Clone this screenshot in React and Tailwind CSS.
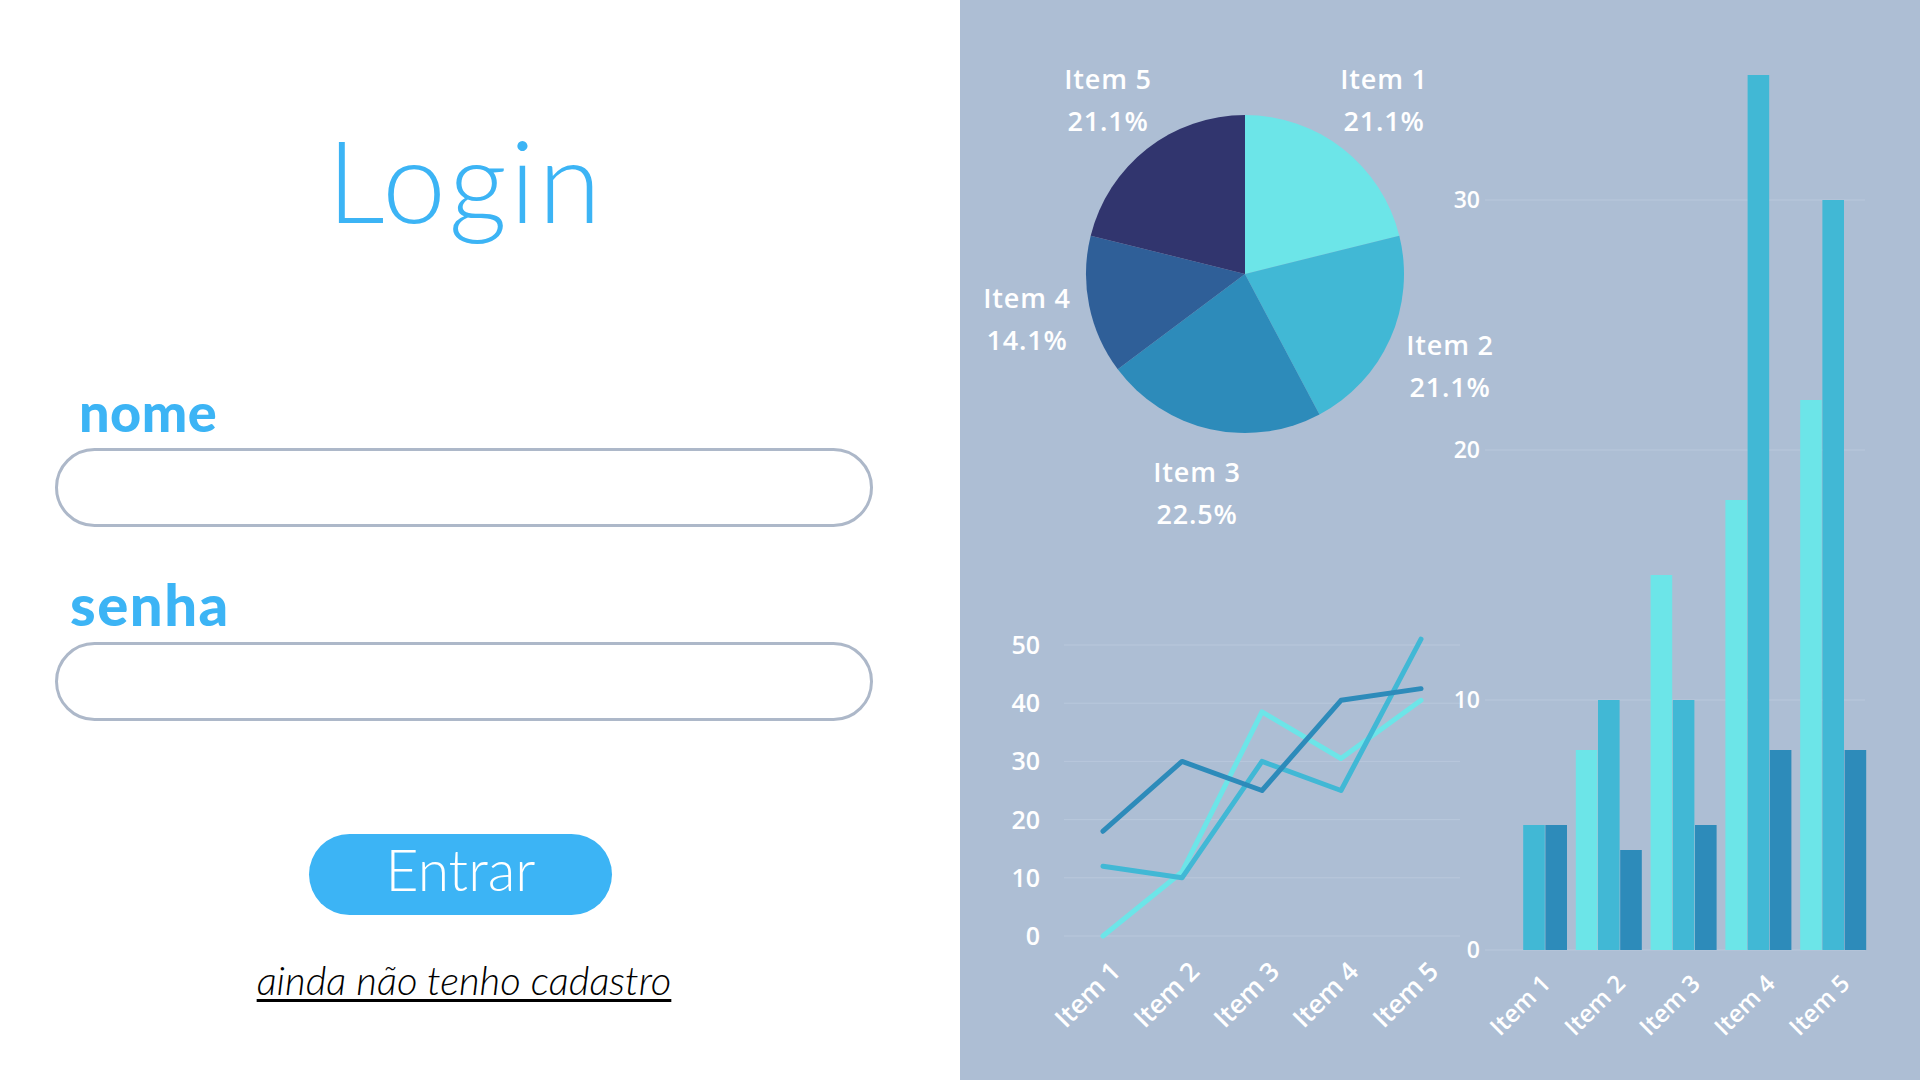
import React from "react";

const C1 = "#6ce5e8";
const C2 = "#41b8d5";
const C3 = "#2d8bba";
const C4 = "#2f5f98";
const C5 = "#31356e";
const FONT = "'Open Sans', 'Liberation Sans', sans-serif";

function slicePath(cx, cy, r, a0, a1) {
  const rad = (a) => (a * Math.PI) / 180;
  const x0 = cx + r * Math.sin(rad(a0));
  const y0 = cy - r * Math.cos(rad(a0));
  const x1 = cx + r * Math.sin(rad(a1));
  const y1 = cy - r * Math.cos(rad(a1));
  const large = a1 - a0 > 180 ? 1 : 0;
  return `M ${cx} ${cy} L ${x0} ${y0} A ${r} ${r} 0 ${large} 1 ${x1} ${y1} Z`;
}

function Pie() {
  const vals = [21.1, 21.1, 22.5, 14.1, 21.1];
  const cols = [C1, C2, C3, C4, C5];
  const total = vals.reduce((a, b) => a + b, 0);
  let acc = 0;
  const slices = vals.map((v, i) => {
    const a0 = (acc / total) * 360;
    acc += v;
    const a1 = (acc / total) * 360;
    return <path key={i} d={slicePath(285, 274, 159, a0, a1)} fill={cols[i]} />;
  });
  const labels = [
    { x: 148, y: 89, t: "Item 5", p: "21.1%" },
    { x: 424, y: 89, t: "Item 1", p: "21.1%" },
    { x: 67, y: 308, t: "Item 4", p: "14.1%" },
    { x: 490, y: 355, t: "Item 2", p: "21.1%" },
    { x: 237, y: 482, t: "Item 3", p: "22.5%" },
  ];
  return (
    <g>
      {slices}
      {labels.map((l, i) => (
        <g key={i} fill="#ffffff" fontFamily={FONT} fontWeight="600" fontSize="27" textAnchor="middle" letterSpacing="0.8">
          <text x={l.x} y={l.y}>{l.t}</text>
          <text x={l.x} y={l.y + 42}>{l.p}</text>
        </g>
      ))}
    </g>
  );
}

function LineChart() {
  const xs = [143, 222, 302, 381, 461];
  const y0 = 936;
  const unit = (936 - 645) / 50;
  const series = [
    { c: C1, v: [0, 11, 38.5, 30.5, 40.5] },
    { c: C2, v: [12, 10, 30, 25, 51] },
    { c: C3, v: [18, 30, 25, 40.5, 42.5] },
  ];
  const ticks = [0, 10, 20, 30, 40, 50];
  return (
    <g>
      {ticks.map((t) => (
        <g key={t}>
          <line x1={104} x2={500} y1={y0 - t * unit} y2={y0 - t * unit} stroke="#b9c8dc" strokeWidth="1" />
          <text x={80} y={y0 - t * unit + 9} fill="#ffffff" fontFamily={FONT} fontWeight="600" fontSize="25" textAnchor="end">
            {t}
          </text>
        </g>
      ))}
      {series.map((s, i) => (
        <polyline
          key={i}
          points={s.v.map((v, j) => `${xs[j]},${y0 - v * unit}`).join(" ")}
          fill="none"
          stroke={s.c}
          strokeWidth="5"
          strokeLinejoin="round"
          strokeLinecap="round"
        />
      ))}
      {xs.map((x, i) => (
        <text
          key={i}
          x={x + 19}
          y={973}
          transform={`rotate(-45 ${x + 19} 973)`}
          fill="#ffffff"
          fontFamily={FONT}
          fontWeight="600"
          fontSize="26"
          textAnchor="end"
        >
          {`Item ${i + 1}`}
        </text>
      ))}
    </g>
  );
}

function BarChart() {
  const y0 = 950;
  const unit = 25;
  const data = [
    [0, 5, 5],
    [8, 10, 4],
    [15, 10, 5],
    [18, 35, 8],
    [22, 30, 8],
  ];
  const cols = [C1, C2, C3];
  const ticks = [0, 10, 20, 30];
  const bw = 21.6;
  return (
    <g>
      {ticks.map((t) => (
        <g key={t}>
          <line x1={525} x2={905} y1={y0 - t * unit} y2={y0 - t * unit} stroke="#b9c8dc" strokeWidth="1" />
          <text x={520} y={y0 - t * unit + 8} fill="#ffffff" fontFamily={FONT} fontWeight="600" fontSize="23" textAnchor="end">
            {t}
          </text>
        </g>
      ))}
      {data.map((g, i) => {
        const gx = 541 + i * 74.8;
        return (
          <g key={i}>
            {g.map((v, j) =>
              v > 0 ? (
                <rect key={j} x={gx + j * (bw + 0.6)} y={y0 - v * unit} width={bw} height={v * unit} fill={cols[j]} />
              ) : null
            )}
            <text
              x={gx + 51}
              y={985}
              transform={`rotate(-45 ${gx + 51} 985)`}
              fill="#ffffff"
              fontFamily={FONT}
              fontWeight="600"
              fontSize="24"
              textAnchor="end"
            >
              {`Item ${i + 1}`}
            </text>
          </g>
        );
      })}
    </g>
  );
}

export default function App() {
  return (
    <div className="flex w-full h-[1080px] overflow-hidden">
      <div className="w-[960px] h-full bg-white flex flex-col font-['Lato','Liberation_Sans',sans-serif]">
        <div className="ml-[55px] w-[818px] flex flex-col">
          <h1 className="mt-[122px] h-[114px] pl-[3px] text-center text-[114px] leading-none font-light tracking-[3px] text-[#3cb4f5]">
            Login
          </h1>
          <div className="mt-[149px] ml-[24px] h-[54px] text-[54px] leading-none font-black tracking-[0.5px] text-[#3cb4f5]">
            nome
          </div>
          <div className="mt-[9px] h-[79px] w-full rounded-full border-[3px] border-[#adb8c9] bg-white" />
          <div className="mt-[48px] ml-[15px] h-[58px] text-[58px] leading-none font-black tracking-[1.5px] text-[#3cb4f5]">
            senha
          </div>
          <div className="mt-[9px] h-[79px] w-full rounded-full border-[3px] border-[#adb8c9] bg-white" />
          <div className="mt-[113px] ml-[254px] w-[303px] h-[81px] rounded-full bg-[#3cb4f5] flex items-center justify-center pb-[10px]">
            <span className="text-[57px] leading-none font-light text-white">Entrar</span>
          </div>
          <div className="mt-[45px] text-center">
            <span className="text-[40px] leading-none italic font-light text-black underline decoration-[3px] underline-offset-[4px]">
              ainda não tenho cadastro
            </span>
          </div>
        </div>
      </div>
      <div className="flex-1 h-full bg-[#adbed4]">
        <svg width="960" height="1080" viewBox="0 0 960 1080" className="block">
          <Pie />
          <LineChart />
          <BarChart />
        </svg>
      </div>
    </div>
  );
}
